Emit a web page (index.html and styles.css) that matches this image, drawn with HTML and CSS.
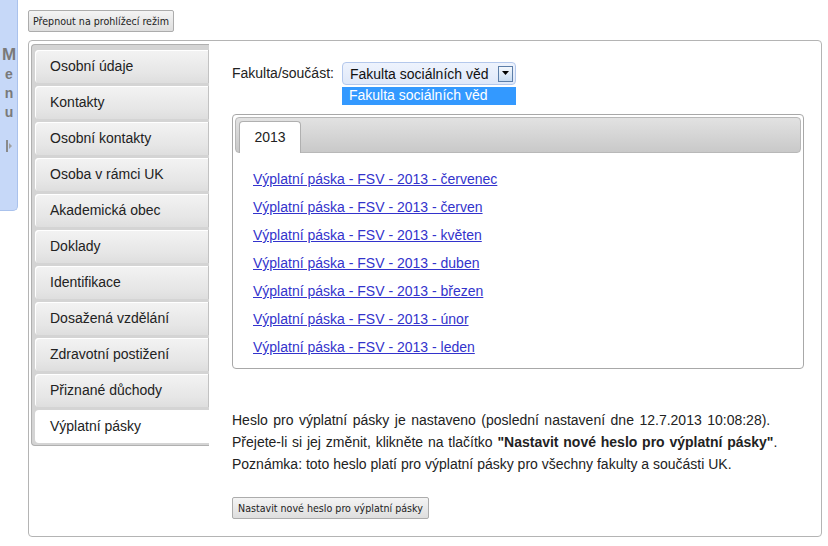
FILE: index.html
```html
<!DOCTYPE html>
<html lang="cs">
<head>
<meta charset="utf-8">
<title>Výplatní pásky</title>
<link rel="stylesheet" href="styles.css">
</head>
<body>
<div class="page">
  <aside class="sidetab">
    <span class="sidetab-l sidetab-big">M</span>
    <span class="sidetab-l">e</span>
    <span class="sidetab-l">n</span>
    <span class="sidetab-l">u</span>
    <svg class="sidetab-icon" width="8" height="14" viewBox="0 0 8 14"><rect x="1" y="1" width="2" height="12" fill="#8a8a8a"/><path d="M4 4 L7 7 L4 10 Z" fill="#a0a0a0"/></svg>
  </aside>
  <main class="main">
    <button class="btn">Přepnout na prohlížecí režim</button>
    <section class="panel">
      <nav class="vnav">
        <a class="vnav-item">Osobní údaje</a>
        <a class="vnav-item">Kontakty</a>
        <a class="vnav-item">Osobní kontakty</a>
        <a class="vnav-item">Osoba v rámci UK</a>
        <a class="vnav-item">Akademická obec</a>
        <a class="vnav-item">Doklady</a>
        <a class="vnav-item">Identifikace</a>
        <a class="vnav-item">Dosažená vzdělání</a>
        <a class="vnav-item">Zdravotní postižení</a>
        <a class="vnav-item">Přiznané důchody</a>
        <a class="vnav-item is-active">Výplatní pásky</a>
      </nav>
      <div class="content">
        <div class="field">
          <span class="field-label">Fakulta/součást:</span>
          <div class="select-wrap">
            <div class="select">
              <span class="select-value">Fakulta sociálních věd</span>
              <span class="select-arrow"><svg width="8" height="5" viewBox="0 0 8 5"><path d="M0 0 H7 L3.5 4 Z" fill="#000"/></svg></span>
            </div>
            <div class="select-option">Fakulta sociálních věd</div>
          </div>
        </div>
        <div class="tabs">
          <div class="tabs-bar">
            <span class="tab">2013</span>
          </div>
          <ul class="links">
            <li><a href="#">Výplatní páska - FSV - 2013 - červenec</a></li>
            <li><a href="#">Výplatní páska - FSV - 2013 - červen</a></li>
            <li><a href="#">Výplatní páska - FSV - 2013 - květen</a></li>
            <li><a href="#">Výplatní páska - FSV - 2013 - duben</a></li>
            <li><a href="#">Výplatní páska - FSV - 2013 - březen</a></li>
            <li><a href="#">Výplatní páska - FSV - 2013 - únor</a></li>
            <li><a href="#">Výplatní páska - FSV - 2013 - leden</a></li>
          </ul>
        </div>
        <p class="note"><span class="note-wide">Heslo pro výplatní pásky je nastaveno (poslední nastavení dne 12.7.2013 10:08:28).</span><br><span class="note-mid">Přejete-li si jej změnit, klikněte na tlačítko <b>"Nastavit nové heslo pro výplatní pásky"</b>.</span><br>Poznámka: toto heslo platí pro výplatní pásky pro všechny fakulty a součásti UK.</p>
        <button class="btn">Nastavit nové heslo pro výplatní pásky</button>
      </div>
    </section>
  </main>
</div>
</body>
</html>
```

FILE: styles.css
```css
html, body {
  margin: 0;
  padding: 0;
  background: #fff;
}
body {
  font-family: "Liberation Sans", Arial, sans-serif;
  font-size: 14px;
  color: #222;
}
.page {
  display: flex;
  align-items: flex-start;
}
.sidetab {
  width: 18px;
  height: 211px;
  background: #c6d8f8;
  border: 1px solid #aac2ec;
  border-left: none;
  border-top: none;
  border-radius: 0 0 5px 0;
  display: flex;
  flex-direction: column;
  align-items: center;
  padding-top: 45px;
  box-sizing: border-box;
  flex: none;
}
.sidetab-l {
  font-weight: bold;
  color: #7a7a7a;
  font-size: 14px;
  line-height: 19px;
  margin-left: 1px;
}
.sidetab-big {
  font-size: 17px;
  line-height: 20px;
}
.sidetab-icon {
  margin-top: 17px;
}
.main {
  margin-left: 10px;
  padding-top: 10px;
  display: flex;
  flex-direction: column;
  align-items: flex-start;
}
.btn {
  font-family: "DejaVu Sans Condensed", "Liberation Sans", sans-serif;
  font-size: 10.6px;
  color: #222;
  height: 22px;
  padding: 0 4px;
  border: 1px solid #acacac;
  border-radius: 2px;
  background: linear-gradient(#f4f4f4, #dedede);
  margin: 0;
}
.panel {
  margin-top: 8px;
  width: 794px;
  height: 497px;
  box-sizing: border-box;
  border: 1px solid #b4b4b4;
  border-radius: 4px;
  display: flex;
  align-items: flex-start;
  padding: 3px 0 0 2px;
}
.vnav {
  width: 178px;
  box-sizing: border-box;
  border: 1px solid #b0b0b0;
  border-right: none;
  border-radius: 4px 0 0 4px;
  background: #d4d4d4;
  padding: 5px 0 2px 3px;
  display: flex;
  flex-direction: column;
  gap: 3px;
  flex: none;
}
.vnav-item {
  display: block;
  height: 33px;
  line-height: 33px;
  padding-left: 15px;
  border-radius: 4px 0 0 4px;
  border-right: 1px solid #c2c2c2;
  background: linear-gradient(#f3f3f3, #e6e6e6 70%, #dedede);
  box-shadow: inset 1px 1px 0 #fff;
  color: #222;
  font-size: 14px;
}
.vnav-item.is-active {
  background: #fff;
  box-shadow: none;
  border-right-color: #fff;
  margin-right: -1px;
}
.content {
  margin-left: 23px;
  padding-top: 18px;
  display: flex;
  flex-direction: column;
  align-items: flex-start;
}
.field {
  display: flex;
  align-items: flex-start;
}
.field-label {
  line-height: 22px;
  width: 110px;
}
.select-wrap {
  display: flex;
  flex-direction: column;
}
.select {
  width: 174px;
  height: 23px;
  box-sizing: border-box;
  border: 1px solid #b4c8ec;
  border-radius: 4px;
  background: linear-gradient(#eef3fd, #dfe8f9);
  display: flex;
  align-items: center;
  justify-content: space-between;
  padding: 0 2px 0 7px;
}
.select-value {
  font-size: 14px;
  color: #111;
}
.select-arrow {
  width: 15px;
  height: 16px;
  box-sizing: border-box;
  border: 1px solid #5c7ea8;
  background: linear-gradient(#f4f8fd, #c7dbf2);
  display: flex;
  align-items: center;
  justify-content: center;
}
.select-option {
  margin-top: 2px;
  height: 18px;
  line-height: 17px;
  background: #3399ff;
  color: #fff;
  padding-left: 7px;
  font-size: 14px;
}
.tabs {
  margin-top: 9px;
  width: 572px;
  height: 255px;
  box-sizing: border-box;
  border: 1px solid #a8a8a8;
  border-radius: 4px;
  padding: 2px;
}
.tabs-bar {
  height: 36px;
  box-sizing: border-box;
  border: 1px solid #b8b8b8;
  border-radius: 4px;
  background: linear-gradient(#e2e2e2, #c9c9c9);
  padding: 3px 0 0 3px;
  display: flex;
  align-items: flex-end;
}
.tab {
  width: 62px;
  height: 32px;
  box-sizing: border-box;
  background: #fff;
  border: 1px solid #b0b0b0;
  border-bottom: none;
  border-radius: 4px 4px 0 0;
  text-align: center;
  line-height: 30px;
  font-size: 14px;
  margin-bottom: -1px;
}
.links {
  list-style: none;
  margin: 0;
  padding: 12px 0 0 18px;
}
.links li {
  line-height: 28px;
}
.links a {
  color: #3333cc;
  text-decoration: underline;
}
.note {
  margin: 40px 0 0;
  line-height: 22px;
  color: #222;
}
.note-wide {
  word-spacing: 1.6px;
}
.note-mid {
  word-spacing: 0.9px;
}
.content .btn {
  margin-top: 22px;
  padding: 0 5px;
}
```
